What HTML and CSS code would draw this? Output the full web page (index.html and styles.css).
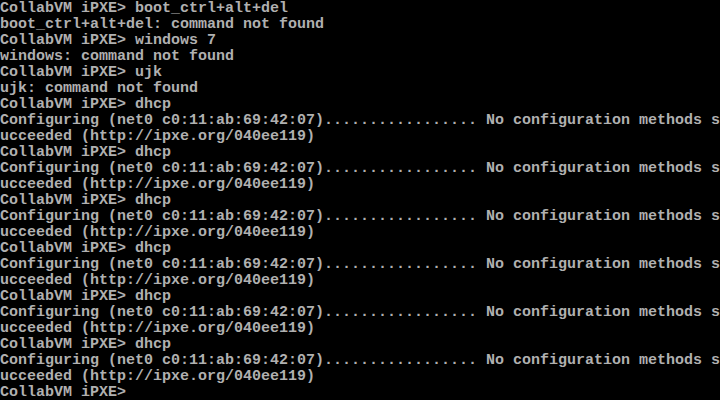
FILE: index.html
```html
<!DOCTYPE html>
<html>
<head>
<meta charset="utf-8">
<link rel="stylesheet" href="styles.css">
</head>
<body>
<div class="screen">
<div class="row">CollabVM iPXE&gt; boot_ctrl+alt+del</div>
<div class="row">boot_ctrl+alt+del: command not found</div>
<div class="row">CollabVM iPXE&gt; windows 7</div>
<div class="row">windows: command not found</div>
<div class="row">CollabVM iPXE&gt; ujk</div>
<div class="row">ujk: command not found</div>
<div class="row">CollabVM iPXE&gt; dhcp</div>
<div class="row">Configuring (net0 c0:11:ab:69:42:07)................. No configuration methods s</div>
<div class="row">ucceeded (http://ipxe.org/040ee119)</div>
<div class="row">CollabVM iPXE&gt; dhcp</div>
<div class="row">Configuring (net0 c0:11:ab:69:42:07)................. No configuration methods s</div>
<div class="row">ucceeded (http://ipxe.org/040ee119)</div>
<div class="row">CollabVM iPXE&gt; dhcp</div>
<div class="row">Configuring (net0 c0:11:ab:69:42:07)................. No configuration methods s</div>
<div class="row">ucceeded (http://ipxe.org/040ee119)</div>
<div class="row">CollabVM iPXE&gt; dhcp</div>
<div class="row">Configuring (net0 c0:11:ab:69:42:07)................. No configuration methods s</div>
<div class="row">ucceeded (http://ipxe.org/040ee119)</div>
<div class="row">CollabVM iPXE&gt; dhcp</div>
<div class="row">Configuring (net0 c0:11:ab:69:42:07)................. No configuration methods s</div>
<div class="row">ucceeded (http://ipxe.org/040ee119)</div>
<div class="row">CollabVM iPXE&gt; dhcp</div>
<div class="row">Configuring (net0 c0:11:ab:69:42:07)................. No configuration methods s</div>
<div class="row">ucceeded (http://ipxe.org/040ee119)</div>
<div class="row">CollabVM iPXE&gt;</div>
</div>
</body>
</html>
```
FILE: styles.css
```css
html, body {
  margin: 0;
  padding: 0;
  background: #000;
}
.screen {
  box-sizing: border-box;
  width: 720px;
  height: 400px;
  padding-top: 1px;
  overflow: hidden;
  background: #000;
  color: #b0b0b0;
  font-family: "Liberation Mono", "DejaVu Sans Mono", monospace;
  font-size: 15px;
  font-weight: bold;
  display: flex;
  flex-direction: column;
}
.row {
  flex: none;
  height: 16px;
  line-height: 16px;
  white-space: pre;
  overflow: hidden;
}
```
